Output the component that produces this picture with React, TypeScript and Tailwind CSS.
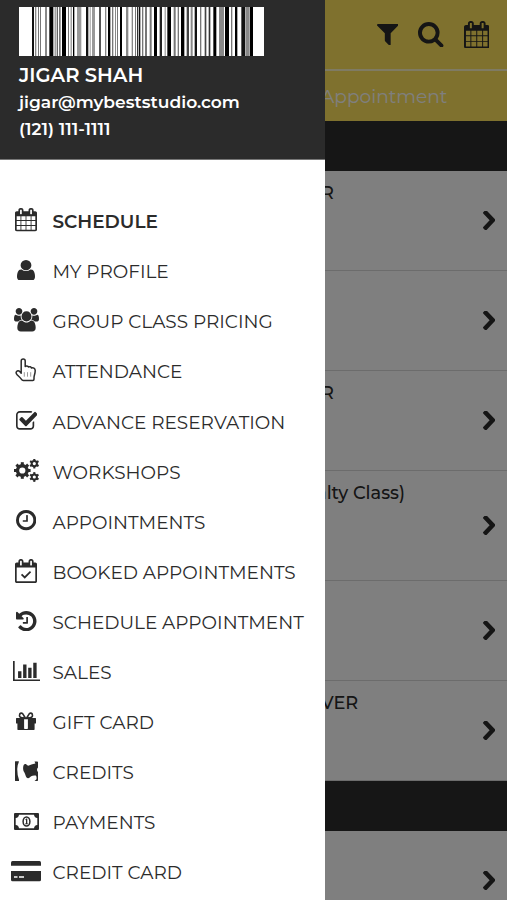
import type { ReactNode } from "react";

interface GlyphProps {
  box: string;
  w: number;
  h: number;
  children: ReactNode;
}

function Glyph({ box, w, h, children }: GlyphProps) {
  return (
    <svg viewBox={box} width={w} height={h} fill="currentColor" preserveAspectRatio="none" className="shrink-0">
      {children}
    </svg>
  );
}

const CALENDAR =
  "M192 1664h288v-288h-288v288zm352 0h320v-288h-320v288zm-352-352h288v-320h-288v320zm352 0h320v-320h-320v320zm-352-384h288v-288h-288v288zm736 736h320v-288h-320v288zm-384-736h320v-288h-320v288zm768 736h288v-288h-288v288zm-384-352h320v-320h-320v320zm-352-864v-288q0-13-9.5-22.5t-22.5-9.5h-64q-13 0-22.5 9.5t-9.5 22.5v288q0 13 9.5 22.5t22.5 9.5h64q13 0 22.5-9.5t9.5-22.5zm736 864h288v-320h-288v320zm-384-384h320v-288h-320v288zm384 0h288v-288h-288v288zm32-480v-288q0-13-9.5-22.5t-22.5-9.5h-64q-13 0-22.5 9.5t-9.5 22.5v288q0 13 9.5 22.5t22.5 9.5h64q13 0 22.5-9.5t9.5-22.5zm384-64v1280q0 52-38 90t-90 38h-1408q-52 0-90-38t-38-90v-1280q0-52 38-90t90-38h128v-96q0-66 47-113t113-47h64q66 0 113 47t47 113v96h384v-96q0-66 47-113t113-47h64q66 0 113 47t47 113v96h128q52 0 90 38t38 90z";

const CalendarIcon = ({ w, h }: { w: number; h: number }) => (
  <Glyph box="64 0 1664 1792" w={w} h={h}>
    <path d={CALENDAR} />
  </Glyph>
);

const UserIcon = () => (
  <Glyph box="256 128 1280 1536" w={18} h={20.5}>
    <path d="M1536 1399q0 109-62.5 187t-150.5 78h-854q-88 0-150.5-78t-62.5-187q0-85 8.5-160.5t31.5-152 58.5-131 94-89 134.5-34.5q131 128 313 128t313-128q76 0 134.5 34.5t94 89 58.5 131 31.5 152 8.5 160.5zm-256-887q0 159-112.5 271.5t-271.5 112.5-271.5-112.5-112.5-271.5 112.5-271.5 271.5-112.5 271.5 112.5 112.5 271.5z" />
  </Glyph>
);

const UsersIcon = () => (
  <Glyph box="0 0 1920 1792" w={25} h={23.5}>
    <path d="M593 896q-162 5-265 128h-134q-82 0-138-40.5t-56-118.5q0-353 124-353 6 0 43.5 21t97.5 42.5 119 21.5q67 0 133-23-5 37-5 66 0 139 81 256zm1071 637q0 120-73 189.5t-194 69.5h-874q-121 0-194-69.5t-73-189.5q0-53 3.5-103.5t14-109 26.5-108.5 43-97.5 62-81 85.5-53.5 111.5-20q10 0 43 21.5t73 48 107 48 135 21.5 135-21.5 107-48 73-48 43-21.5q61 0 111.5 20t85.5 53.5 62 81 43 97.5 26.5 108.5 14 109 3.5 103.5zm-1024-1277q0 106-75 181t-181 75-181-75-75-181 75-181 181-75 181 75 75 181zm704 384q0 159-112.5 271.5t-271.5 112.5-271.5-112.5-112.5-271.5 112.5-271.5 271.5-112.5 271.5 112.5 112.5 271.5zm576 225q0 78-56 118.5t-138 40.5h-134q-103-123-265-128 81-117 81-256 0-29-5-66 66 23 133 23 59 0 119-21.5t97.5-42.5 43.5-21q124 0 124 353zm-128-609q0 106-75 181t-181 75-181-75-75-181 75-181 181-75 181 75 75 181z" />
  </Glyph>
);

const HandIcon = () => (
  <Glyph box="0 0 22 24" w={22} h={24}>
    <path
      d="M6.2 15.2V3a2 2 0 0 1 4 0v5.6c.5-1 2.8-1 3.3.4 1-.7 2.7-.2 3 1 1.6-.6 3.7.2 3.7 2.4 0 3.6-1.2 4.8-1.2 7.3v1.6c0 .8-.4 1.2-1.2 1.2H8.3c-1 0-1.5-.5-2-1.3-1-1.6-2.4-2.6-4-4.2C.9 15.6.8 14.6 1.5 13.6c.8-1 2.3-1 3.3 0z"
      fill="none"
      stroke="currentColor"
      strokeWidth="1.5"
      strokeLinejoin="round"
    />
    <path d="M9.3 14.2v4.5M12.5 14.2v4.5M15.7 14.2v4.5" fill="none" stroke="currentColor" strokeWidth="0.8" opacity="0.6" />
  </Glyph>
);

const CheckSquareIcon = () => (
  <Glyph box="64 128 1663 1408" w={21.5} h={18.8}>
    <path d="M1472 930v318q0 119-84.5 203.5t-203.5 84.5h-832q-119 0-203.5-84.5t-84.5-203.5v-832q0-119 84.5-203.5t203.5-84.5h832q63 0 117 25 15 7 18 23 3 17-9 29l-49 49q-10 10-23 10-3 0-9-2-23-6-45-6h-832q-66 0-113 47t-47 113v832q0 66 47 113t113 47h832q66 0 113-47t47-113v-254q0-13 9-22l64-64q10-10 23-10 6 0 12 3 20 8 20 29zm231-489l-814 814q-24 24-57 24t-57-24l-430-430q-24-24-24-57t24-57l110-110q24-24 57-24t57 24l263 263 647-647q24-24 57-24t57 24l110 110q24 24 24 57t-24 57z" />
  </Glyph>
);

interface GearProps {
  cx: number;
  cy: number;
  r: number;
  hole: number;
  teeth: number;
  tooth: number;
}

function Gear({ cx, cy, r, hole, teeth, tooth }: GearProps) {
  return (
    <g transform={`translate(${cx} ${cy})`}>
      <circle r={(r + hole) / 2} fill="none" stroke="currentColor" strokeWidth={r - hole} />
      {Array.from({ length: teeth }, (_, i) => (
        <rect key={i} x={-tooth / 2} y={-r - tooth * 0.6} width={tooth} height={tooth} transform={`rotate(${(360 / teeth) * i})`} />
      ))}
    </g>
  );
}

const CogsIcon = () => (
  <Glyph box="0 0 25 23" w={25} h={23}>
    <Gear cx={8.3} cy={11.5} r={6.5} hole={3.1} teeth={8} tooth={3} />
    <Gear cx={20.3} cy={4.6} r={3.6} hole={1.6} teeth={6} tooth={2.1} />
    <Gear cx={20.3} cy={18} r={3.6} hole={1.6} teeth={6} tooth={2.1} />
  </Glyph>
);

const ClockIcon = () => (
  <Glyph box="128 128 1536 1536" w={20.3} h={20.3}>
    <path d="M1024 544v448q0 14-9 23t-23 9h-320q-14 0-23-9t-9-23v-64q0-14 9-23t23-9h224v-352q0-14 9-23t23-9h64q14 0 23 9t9 23zm416 352q0-148-73-273t-198-198-273-73-273 73-198 198-73 273 73 273 198 198 273 73 273-73 198-198 73-273zm224 0q0 209-103 385.5t-279.5 279.5-385.5 103-385.5-103-279.5-279.5-103-385.5 103-385.5 279.5-279.5 385.5-103 385.5 103 279.5 279.5 103 385.5z" />
  </Glyph>
);

const CalendarCheckIcon = () => (
  <Glyph box="64 0 1664 1792" w={22} h={24}>
    <path
      fillRule="evenodd"
      d="M1600 256q52 0 90 38t38 90v1280q0 52-38 90t-90 38h-1408q-52 0-90-38t-38-90v-1280q0-52 38-90t90-38h128v-96q0-66 47-113t113-47h64q66 0 113 47t47 113v96h384v-96q0-66 47-113t113-47h64q66 0 113 47t47 113v96h128zM192 640v1024h1408v-1024zM480 128q-32 0-32 32v288q0 32 32 32h64q32 0 32-32v-288q0-32-32-32zM1248 128q-32 0-32 32v288q0 32 32 32h64q32 0 32-32v-288q0-32-32-32z"
    />
    <path d="M560 1140l240 235 440-440" fill="none" stroke="currentColor" strokeWidth="130" />
  </Glyph>
);

const HistoryIcon = () => (
  <Glyph box="128 128 1536 1536" w={20.5} h={20.3}>
    <path d="M1664 896q0 156-61 298t-164 245-245 164-298 61q-172 0-327-72.5t-264-204.5q-7-10-6.5-22.5t8.5-20.5l137-138q10-9 25-9 16 2 23 12 73 95 179 147t225 52q104 0 198.5-40.5t163.5-109.5 109.5-163.5 40.5-198.5-40.5-198.5-109.5-163.5-163.5-109.5-198.5-40.5q-98 0-188 35.5t-160 101.5l137 138q31 30 14 69-17 40-59 40h-448q-26 0-45-19t-19-45v-448q0-42 40-59 39-17 69 14l130 129q107-101 244.5-156.5t284.5-55.5q156 0 298 61t245 164 164 245 61 298zm-640-288v448q0 14-9 23t-23 9h-320q-14 0-23-9t-9-23v-64q0-14 9-23t23-9h224v-352q0-14 9-23t23-9h64q14 0 23 9t9 23z" />
  </Glyph>
);

const ChartIcon = () => (
  <Glyph box="0 128 2048 1536" w={27} h={20.3}>
    <path d="M640 896v512h-256v-512h256zm384-512v1024h-256v-1024h256zm1024 1152v128h-2048v-1536h128v1408h1920zm-640-896v768h-256v-768h256zm384-384v1152h-256v-1152h256z" />
  </Glyph>
);

const GiftIcon = () => (
  <Glyph box="0 0 20 18.5" w={20} h={18.5}>
    <path
      fillRule="evenodd"
      d="M.6 6H19.4q.6 0 .6.6V11q0 .5-.5.5H18.6V17q0 1.3-1.3 1.3H2.7Q1.4 18.3 1.4 17V11.5H.5Q0 11.5 0 11V6.6Q0 6 .6 6zM8.1 7.2V16.2Q8.1 16.9 8.8 16.9H11.2Q11.9 16.9 11.9 16.2V7.2z"
    />
    <path
      d="M9.3 6L7.3 2.7C6.2.3 3.6.8 3.5 3.2 3.4 5 4.8 5.9 6.2 5.9zM10.7 6l2-3.3C13.8.3 16.4.8 16.5 3.2 16.6 5 15.2 5.9 13.8 5.9z"
      fill="none"
      stroke="currentColor"
      strokeWidth="1.6"
    />
  </Glyph>
);

const CreditsIcon = () => (
  <Glyph box="0 0 23 20.5" w={23} h={20.5}>
    <path d="M0 .6Q0 .2.5.2H3.8V1.2Q2.5 3.5 2.3 7.5 2.1 14 4 18.8V20H.6Q0 20 0 19.4z" />
    <path d="M8.3 5.3C8.5 3.3 9.8 2.3 11.2 3.3 12 3.9 12.7 4.9 14 4.6 15.5 4.2 17 3.2 20.4 2.6L19.5.4H22.2Q23 .4 23 1.2V6.5C21.7 7.6 21.7 9.6 23 11V19.3Q23 20 22.3 20H19.5L21.3 18.6C21.9 17.3 21.6 15.5 20.8 14.6 18.5 14.7 16.3 14.9 15.2 16 14 17.2 12.9 17.7 11.8 16.8 10.7 15.5 10.5 13.5 9.4 11.5 8 9.4 7.9 7.2 8.3 5.3z" />
  </Glyph>
);

const MoneyIcon = () => (
  <Glyph box="0 0 25 17" w={25} h={17}>
    <path
      fillRule="evenodd"
      d="M1 0H24Q25 0 25 1V16Q25 17 24 17H1Q0 17 0 16V1Q0 0 1 0zM5 1.7Q4.7 4.7 1.7 5V12Q4.7 12.3 5 15.3H20Q20.3 12.3 23.3 12V5Q20.3 4.7 20 1.7z"
    />
    <ellipse cx="12.5" cy="8.5" rx="3.4" ry="4.6" fill="none" stroke="currentColor" strokeWidth="1.5" />
    <path d="M11.2 6.7L12.3 5.6H13.3V10.4H14.3V11.3H11V10.4H12V7.2z" />
  </Glyph>
);

const CardIcon = () => (
  <Glyph box="0 0 30 20.5" w={30} h={20.5}>
    <path d="M1.5 0H28.5Q30 0 30 1.5V4.7H0V1.5Q0 0 1.5 0z" />
    <path fillRule="evenodd" d="M0 10H30V18.8Q30 20.3 28.5 20.3H1.5Q0 20.3 0 18.8zM3 15.2V16.7H6.5V15.2zM8 15.2V16.7H13V15.2z" />
  </Glyph>
);

const ChevronIcon = () => (
  <Glyph box="346 109 1036 1530" w={12.5} h={19.5}>
    <path d="M1363 877l-742 742q-19 19-45 19t-45-19l-166-166q-19-19-19-45t19-45l531-531-531-531q-19-19-19-45t19-45l166-166q19-19 45-19t45 19l742 742q19 19 19 45t-19 45z" />
  </Glyph>
);

const FilterIcon = () => (
  <Glyph box="192 256 1408 1408" w={21.5} h={21.5}>
    <path d="M1595 295q17 41-14 70l-493 493v742q0 42-40 59-13 5-24 5-27 0-45-19l-256-256q-19-19-19-45v-486l-493-493q-31-29-14-70 17-39 59-39h1280q42 0 59 39z" />
  </Glyph>
);

const SearchIcon = () => (
  <Glyph box="64 128 1664 1664" w={25.5} h={25.5}>
    <path d="M1216 832q0-185-131.5-316.5t-316.5-131.5-316.5 131.5-131.5 316.5 131.5 316.5 316.5 131.5 316.5-131.5 131.5-316.5zm512 832q0 52-38 90t-90 38q-54 0-90-38l-343-342q-179 124-399 124-143 0-273.5-55.5t-225-150-150-225-55.5-273.5 55.5-273.5 150-225 225-150 273.5-55.5 273.5 55.5 225 150 150 225 55.5 273.5q0 220-124 399l343 343q37 37 37 90z" />
  </Glyph>
);

// [start, end, shade] in thirds of a pixel
const BARS: [number, number, string][] = [
  [39, 45, "#111"], [48, 52, "#888"], [57, 60, "#777"], [63, 66, "#777"], [78, 84, "#888"],
  [91, 103, "#000"], [107, 110, "#777"], [113, 117, "#666"], [120, 125, "#777"], [129, 141, "#000"],
  [147, 150, "#777"], [155, 158, "#777"], [162, 166, "#000"], [174, 187, "#999"], [201, 208, "#111"],
  [212, 215, "#999"], [219, 228, "#999"], [240, 246, "#555"], [258, 262, "#888"], [267, 274, "#000"],
  [279, 283, "#777"], [288, 291, "#888"], [294, 297, "#777"], [303, 309, "#000"], [321, 328, "#888"],
  [338, 342, "#888"], [348, 351, "#777"], [354, 358, "#333"], [360, 364, "#111"], [369, 373, "#777"],
  [378, 384, "#777"], [392, 398, "#777"], [405, 414, "#000"], [422, 429, "#222"], [437, 440, "#888"],
  [445, 456, "#000"], [464, 470, "#777"], [476, 480, "#777"], [486, 496, "#000"], [503, 510, "#444"],
  [515, 521, "#888"], [527, 534, "#111"], [543, 547, "#777"], [557, 562, "#444"], [569, 574, "#333"],
  [583, 592, "#000"], [600, 615, "#888"], [618, 630, "#000"], [636, 640, "#777"], [648, 655, "#000"],
  [667, 679, "#111"], [681, 690, "#888"], [692, 702, "#000"],
];

const Barcode = () => (
  <svg viewBox="0 0 735 147" width={245} height={49} preserveAspectRatio="none" className="block">
    <rect width="735" height="147" fill="#fff" />
    {BARS.map(([from, to, shade]) => (
      <rect key={from} x={from} width={to - from} height="147" fill={shade} />
    ))}
  </svg>
);

interface MenuItem {
  label: string;
  icon: ReactNode;
  active?: boolean;
}

const MENU: MenuItem[] = [
  { label: "SCHEDULE", icon: <CalendarIcon w={22} h={23.3} />, active: true },
  { label: "MY PROFILE", icon: <UserIcon /> },
  { label: "GROUP CLASS PRICING", icon: <UsersIcon /> },
  { label: "ATTENDANCE", icon: <HandIcon /> },
  { label: "ADVANCE RESERVATION", icon: <CheckSquareIcon /> },
  { label: "WORKSHOPS", icon: <CogsIcon /> },
  { label: "APPOINTMENTS", icon: <ClockIcon /> },
  { label: "BOOKED APPOINTMENTS", icon: <CalendarCheckIcon /> },
  { label: "SCHEDULE APPOINTMENT", icon: <HistoryIcon /> },
  { label: "SALES", icon: <ChartIcon /> },
  { label: "GIFT CARD", icon: <GiftIcon /> },
  { label: "CREDITS", icon: <CreditsIcon /> },
  { label: "PAYMENTS", icon: <MoneyIcon /> },
  { label: "CREDIT CARD", icon: <CardIcon /> },
];

function ClassRow({ title = "", shift = "", size }: { title?: string; shift?: string; size: string }) {
  return (
    <div className={`flex shrink-0 border-b border-[#d8d8d8] pr-3 ${size}`}>
      <div className={`flex-1 pt-[9.5px] text-[17.8px] leading-6 font-medium whitespace-nowrap ${shift}`}>{title}</div>
      <div className="flex items-center">
        <ChevronIcon />
      </div>
    </div>
  );
}

function Drawer() {
  return (
    <aside className="absolute inset-y-0 left-0 flex w-[325px] flex-col overflow-hidden bg-white">
      <header className="h-[160px] shrink-0 border-b border-[#777] bg-[#2b2b2b] pt-[7px] pl-[19px] font-semibold text-white">
        <Barcode />
        <div className="mt-[6px] text-[19.5px] leading-[26px]">JIGAR SHAH</div>
        <div className="text-[17.1px] leading-[27px]">jigar@mybeststudio.com</div>
        <div className="text-[17.1px] leading-[27px]">(121) 111-1111</div>
      </header>
      <nav className="pt-[37px]">
        {MENU.map(({ label, icon, active }) => (
          <a key={label} href="#" className="flex h-[50.1px] items-center">
            <span className="flex w-[52.5px] justify-center pb-1">{icon}</span>
            <span className={`text-[18.45px] whitespace-nowrap ${active ? "font-semibold" : ""}`}>{label}</span>
          </a>
        ))}
      </nav>
    </aside>
  );
}

export default function App() {
  return (
    <div className="relative h-[900px] w-[507px] overflow-hidden bg-white font-['Montserrat','Inter',sans-serif] text-[#2b2b2b]">
      <main className="flex h-full flex-col pl-[325px]">
        <div className="flex h-[69px] shrink-0 items-center justify-end gap-5 bg-[#ffe35c] pr-[18px]">
          <FilterIcon />
          <SearchIcon />
          <CalendarIcon w={25.5} h={27.5} />
        </div>
        <div className="flex h-[52px] shrink-0 items-center border-t-2 border-[#fff6c8] bg-[#ffe35c] pt-[2px] text-[18.6px] whitespace-nowrap text-white">
          <span className="-ml-1">Appointment</span>
        </div>
        <div className="h-[50px] shrink-0 bg-[#2d2d2d]" />
        <ClassRow title="R" shift="-ml-1" size="h-[100px]" />
        <ClassRow size="h-[100px]" />
        <ClassRow title="R" shift="-ml-1" size="h-[100px]" />
        <ClassRow title="alty Class)" shift="-ml-[9px]" size="h-[110px]" />
        <ClassRow size="h-[100px]" />
        <ClassRow title="VER" shift="-ml-1" size="h-[100px]" />
        <div className="h-[50px] shrink-0 bg-[#2d2d2d]" />
        <ClassRow size="h-[100px]" />
      </main>
      <div className="absolute inset-0 bg-black/50" />
      <Drawer />
    </div>
  );
}
